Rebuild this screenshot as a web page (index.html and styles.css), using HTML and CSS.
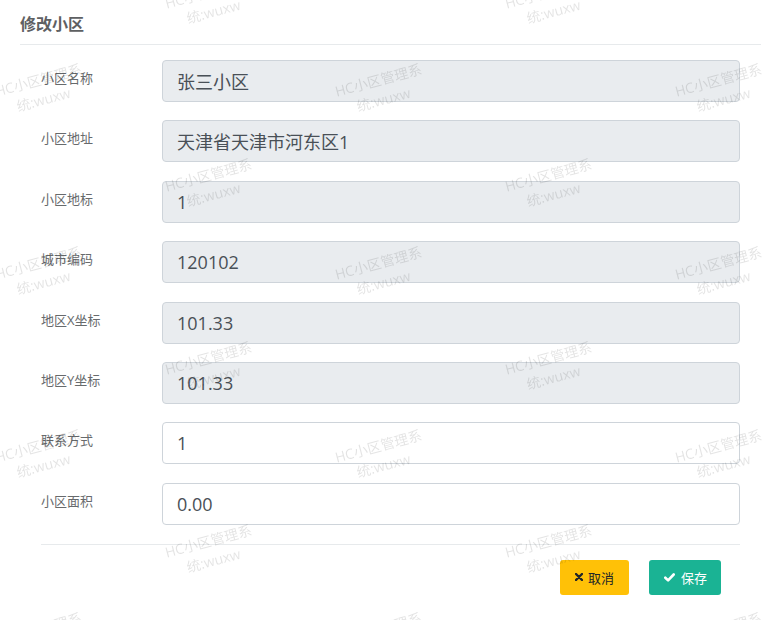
FILE: index.html
```html
<!DOCTYPE html>
<html lang="zh-CN">
<head>
  <meta charset="UTF-8">
  <meta name="viewport" content="width=device-width, initial-scale=1.0">
  <title>修改小区</title>
  <link rel="stylesheet" href="styles.css">
</head>
<body>

<div class="ibox-title">
  <h5>修改小区</h5>
</div>

<form class="edit-form">
  <div class="form-row">
    <label>小区名称</label>
    <input type="text" class="form-control" value="张三小区" readonly>
  </div>
  <div class="form-row">
    <label>小区地址</label>
    <input type="text" class="form-control" value="天津省天津市河东区1" readonly>
  </div>
  <div class="form-row">
    <label>小区地标</label>
    <input type="text" class="form-control" value="1" readonly>
  </div>
  <div class="form-row">
    <label>城市编码</label>
    <input type="text" class="form-control" value="120102" readonly>
  </div>
  <div class="form-row">
    <label>地区X坐标</label>
    <input type="text" class="form-control" value="101.33" readonly>
  </div>
  <div class="form-row">
    <label>地区Y坐标</label>
    <input type="text" class="form-control" value="101.33" readonly>
  </div>
  <div class="form-row">
    <label>联系方式</label>
    <input type="text" class="form-control editable" value="1">
  </div>
  <div class="form-row">
    <label>小区面积</label>
    <input type="text" class="form-control editable" value="0.00">
  </div>

  <div class="form-footer">
    <button type="button" class="btn btn-warning">
      <svg class="icon" width="8" height="8" viewBox="0 0 8 8"><path d="M1 1L7 7M7 1L1 7" stroke="currentColor" stroke-width="2.4" stroke-linecap="round"/></svg>
      取消
    </button>
    <button type="button" class="btn btn-primary">
      <svg class="icon" width="11" height="9" viewBox="0 0 11 9"><path d="M1.3 4.7L4.1 7.4L9.7 1.5" fill="none" stroke="currentColor" stroke-width="2.6" stroke-linecap="round" stroke-linejoin="round"/></svg>
      保存
    </button>
  </div>
</form>

<div class="watermark">
  <div class="wm-grid">
    <div class="wm-tile"><div class="wm wm-a"><div>HC小区管理系</div><div>统:wuxw</div></div><div class="wm wm-b"><div>HC小区管理系</div><div>统:wuxw</div></div></div>
    <div class="wm-tile"><div class="wm wm-a"><div>HC小区管理系</div><div>统:wuxw</div></div><div class="wm wm-b"><div>HC小区管理系</div><div>统:wuxw</div></div></div>
    <div class="wm-tile"><div class="wm wm-a"><div>HC小区管理系</div><div>统:wuxw</div></div><div class="wm wm-b"><div>HC小区管理系</div><div>统:wuxw</div></div></div>
    <div class="wm-tile"><div class="wm wm-a"><div>HC小区管理系</div><div>统:wuxw</div></div><div class="wm wm-b"><div>HC小区管理系</div><div>统:wuxw</div></div></div>
    <div class="wm-tile"><div class="wm wm-a"><div>HC小区管理系</div><div>统:wuxw</div></div><div class="wm wm-b"><div>HC小区管理系</div><div>统:wuxw</div></div></div>
    <div class="wm-tile"><div class="wm wm-a"><div>HC小区管理系</div><div>统:wuxw</div></div><div class="wm wm-b"><div>HC小区管理系</div><div>统:wuxw</div></div></div>
    <div class="wm-tile"><div class="wm wm-a"><div>HC小区管理系</div><div>统:wuxw</div></div><div class="wm wm-b"><div>HC小区管理系</div><div>统:wuxw</div></div></div>
    <div class="wm-tile"><div class="wm wm-a"><div>HC小区管理系</div><div>统:wuxw</div></div><div class="wm wm-b"><div>HC小区管理系</div><div>统:wuxw</div></div></div>
    <div class="wm-tile"><div class="wm wm-a"><div>HC小区管理系</div><div>统:wuxw</div></div><div class="wm wm-b"><div>HC小区管理系</div><div>统:wuxw</div></div></div>
    <div class="wm-tile"><div class="wm wm-a"><div>HC小区管理系</div><div>统:wuxw</div></div><div class="wm wm-b"><div>HC小区管理系</div><div>统:wuxw</div></div></div>
    <div class="wm-tile"><div class="wm wm-a"><div>HC小区管理系</div><div>统:wuxw</div></div><div class="wm wm-b"><div>HC小区管理系</div><div>统:wuxw</div></div></div>
    <div class="wm-tile"><div class="wm wm-a"><div>HC小区管理系</div><div>统:wuxw</div></div><div class="wm wm-b"><div>HC小区管理系</div><div>统:wuxw</div></div></div>
  </div>
</div>

</body>
</html>
```

FILE: styles.css
```css
body {
  margin: 0;
  background: #fff;
  color: #676a6c;
  font-family: "Open Sans", "Noto Sans CJK SC", sans-serif;
  font-size: 13px;
}

.ibox-title {
  margin: 0 7px 0 20px;
  padding: 15px 0 10px;
  border-bottom: 1px solid #e7eaec;
}
.ibox-title h5 {
  margin: 0;
  font-size: 16px;
  line-height: 19px;
  font-weight: 700;
  color: #5e6062;
}

.edit-form {
  padding: 15px 28px 0 41px;
}
.form-row {
  display: flex;
  margin-bottom: 18.4px;
}
.form-row label {
  width: 121px;
  flex: none;
  padding-top: 8px;
  line-height: 20px;
  font-size: 13px;
}
.form-control {
  flex: 1;
  min-width: 0;
  box-sizing: border-box;
  height: 42px;
  margin: 0;
  padding: 0 14px;
  border: 1px solid #ced4da;
  border-radius: 4px;
  background: #e9ecef;
  color: #495057;
  font-family: inherit;
  font-size: 18px;
  outline: none;
}
.form-control.editable { background: #fff; }

.form-footer {
  margin-top: 19px;
  padding: 15px 19px 0 0;
  border-top: 1px solid #e7eaec;
  display: flex;
  justify-content: flex-end;
  gap: 20px;
}
.btn {
  display: inline-flex;
  align-items: center;
  gap: 5px;
  height: 35px;
  padding: 0 15px;
  border: none;
  border-radius: 3px;
  font-family: inherit;
  font-size: 13px;
  cursor: pointer;
}
.btn-warning { background: #ffc107; color: #212529; }
.btn-primary { background: #1ab394; color: #fff; padding-right: 14px; gap: 6px; }
.icon { display: block; }

/* watermark layer over the page */
.watermark {
  position: fixed;
  top: 0; left: 0; right: 0; bottom: 0;
  overflow: hidden;
  pointer-events: none;
  z-index: 10;
}
.wm-grid {
  margin: -18px 0 0 -9px;
  display: grid;
  grid-template-columns: repeat(3, 340px);
  grid-auto-rows: 183px;
}
.wm-tile {
  display: grid;
  grid-template-columns: 170px 170px;
  grid-template-rows: 88px 95px;
}
.wm {
  width: 100px;
  height: 40px;
  text-align: center;
  font-size: 14px;
  line-height: 20px;
  white-space: nowrap;
  color: rgba(0, 0, 0, 0.11);
  transform: rotate(-15deg);
}
.wm-a { grid-column: 2; grid-row: 1; }
.wm-b { grid-column: 1; grid-row: 2; }
```
